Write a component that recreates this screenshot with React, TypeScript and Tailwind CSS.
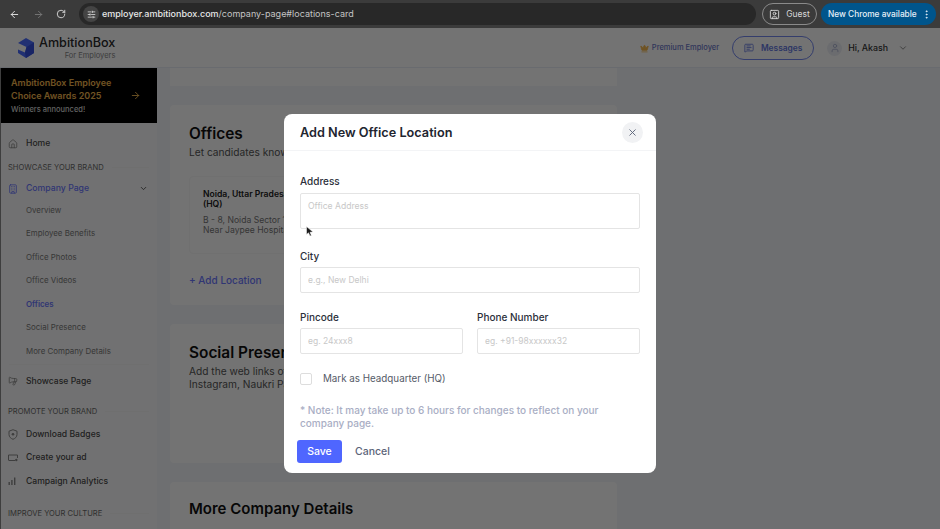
import React from 'react';
import {
  ArrowLeft,
  ArrowRight,
  RotateCw,
  SlidersHorizontal,
  SquareUser,
  EllipsisVertical,
  X,
  House,
  Building,
  ChevronDown,
  Megaphone,
  MessageSquareText,
  User,
  Crown,
} from 'lucide-react';

const subItems = [
  'Overview',
  'Employee Benefits',
  'Office Photos',
  'Office Videos',
  'Offices',
  'Social Presence',
  'More Company Details',
];

function BadgeIcon() {
  return (
    <svg className="h-[11px] w-[10px]" viewBox="0 0 10 11" fill="none" stroke="currentColor" strokeWidth="1">
      <path d="M5 0.7 L9 2.2 V5.5 C9 8 7 9.6 5 10.3 C3 9.6 1 8 1 5.5 V2.2 Z" />
      <circle cx="5" cy="5.3" r="1.3" fill="currentColor" stroke="none" />
    </svg>
  );
}

function AdIcon() {
  return (
    <svg className="h-[8px] w-[10px]" viewBox="0 0 10 8" fill="none" stroke="currentColor" strokeWidth="1">
      <path d="M7 6.5 H1 C0.7 6.5 0.5 6.3 0.5 6 V1 H9.5 V4" />
      <circle cx="8.3" cy="6" r="1.2" fill="currentColor" stroke="none" />
    </svg>
  );
}

function BarsIcon() {
  return (
    <svg className="h-[8px] w-[8px]" viewBox="0 0 8 8" fill="currentColor">
      <rect x="0.5" y="5" width="1.4" height="3" />
      <rect x="3.2" y="3" width="1.4" height="5" />
      <rect x="6" y="0.5" width="1.4" height="7.5" />
    </svg>
  );
}

function SectionLabel({ text, className }: { text: string; className: string }) {
  return (
    <div className={`flex items-center gap-2 pr-2 pl-[7px] ${className}`}>
      <span className="text-[7.6px] leading-none whitespace-nowrap text-[#6a6a6a]">{text}</span>
      <span className="h-px flex-1 bg-[#f6f6f6]" />
    </div>
  );
}

function NavItem({ icon, label, className = '' }: { icon: React.ReactNode; label: string; className?: string }) {
  return (
    <div className={`flex h-[23.5px] items-center pl-[7px] text-[8.6px] font-medium text-[#4a4a4a] ${className}`}>
      <span className="flex w-[18px] items-center text-[#8a8a8a]">{icon}</span>
      {label}
    </div>
  );
}

function Sidebar() {
  return (
    <aside className="flex w-[157px] shrink-0 flex-col border-l border-[#8a8a8a] bg-[#fbfbfc]">
      <div className="flex h-[55px] items-center justify-between bg-black pl-[10px] pr-4">
        <div className="leading-none">
          <p className="text-[9px] leading-[13px] font-semibold text-[#f5b84f]">AmbitionBox Employee</p>
          <p className="text-[9px] leading-[13px] font-semibold text-[#f5b84f]">Choice Awards 2025</p>
          <p className="mt-[2px] text-[7.5px] leading-[11px] font-medium text-[#d8d8d8]">Winners announced!</p>
        </div>
        <ArrowRight className="h-[11px] w-[11px] text-[#f5b84f]" />
      </div>
      <NavItem className="mt-[9px]" label="Home" icon={<House className="h-[10px] w-[10px]" />} />
      <SectionLabel className="mt-[8px]" text="SHOWCASE YOUR BRAND" />
      <div className="mt-[7px] flex h-[21px] items-center pr-[9px] pl-[7px] text-[8.7px] font-medium text-[#6c78ff]">
        <Building className="mr-2 h-[10px] w-[10px]" />
        <span className="flex-1">Company Page</span>
        <ChevronDown className="h-[9px] w-[9px] text-[#333333]" />
      </div>
      {subItems.map((item) => (
        <div
          key={item}
          className={`flex h-[23.5px] items-center pl-[25px] text-[7.9px] ${
            item === 'Offices' ? 'font-semibold text-[#6c78ff]' : 'text-[#7a7a7a]'
          }`}
        >
          {item}
        </div>
      ))}
      <div className="mx-2 h-px bg-[#f6f6f6]" />
      <NavItem className="mt-[5px]" label="Showcase Page" icon={<Megaphone className="h-[10px] w-[10px] -scale-x-100" />} />
      <SectionLabel className="mt-[15px]" text="PROMOTE YOUR BRAND" />
      <NavItem className="mt-[7px]" label="Download Badges" icon={<BadgeIcon />} />
      <NavItem label="Create your ad" icon={<AdIcon />} />
      <NavItem label="Campaign Analytics" icon={<BarsIcon />} />
      <SectionLabel className="mt-[17px]" text="IMPROVE YOUR CULTURE" />
    </aside>
  );
}

function Content() {
  return (
    <main className="ml-[13px] flex w-[447px] shrink-0 flex-col gap-[19px]">
      <div className="h-[18px] shrink-0 bg-white" />
      <section className="h-[200px] shrink-0 rounded bg-white px-[19px] pt-[20px]">
        <h2 className="text-[15.4px] leading-[18px] font-semibold text-[#111111]">Offices</h2>
        <p className="mt-[3px] text-[10.2px] leading-[13px] whitespace-nowrap text-[#555555]">
          Let candidates know where your offices are located
        </p>
        <div className="mt-[17px] h-[78px] w-[200px] rounded border border-[#f8f8f8] px-[13px] pt-[12px]">
          <p className="text-[8.6px] leading-[10px] font-semibold whitespace-nowrap text-[#222222]">Noida, Uttar Pradesh</p>
          <p className="text-[8.6px] leading-[10px] font-semibold text-[#222222]">(HQ)</p>
          <p className="mt-[6px] text-[8.6px] leading-[10px] whitespace-nowrap text-[#777777]">B - 8, Noida Sector 16</p>
          <p className="text-[8.6px] leading-[10px] whitespace-nowrap text-[#777777]">Near Jaypee Hospital</p>
        </div>
        <p className="mt-[19px] text-[10px] leading-[14px] font-medium text-[#6c78ff]">+ Add Location</p>
      </section>
      <section className="h-[139px] shrink-0 rounded bg-white px-[19px] pt-[20px]">
        <h2 className="text-[15.4px] leading-[18px] font-semibold whitespace-nowrap text-[#111111]">Social Presence</h2>
        <p className="mt-[3px] text-[10.2px] leading-[13px] whitespace-nowrap text-[#555555]">Add the web links of your</p>
        <p className="text-[10.2px] leading-[13px] whitespace-nowrap text-[#555555]">Instagram, Naukri Page</p>
      </section>
      <section className="h-[60px] shrink-0 rounded bg-white px-[19px] pt-[18px]">
        <h2 className="text-[15px] leading-[18px] font-semibold whitespace-nowrap text-[#111111]">More Company Details</h2>
      </section>
    </main>
  );
}

function Field({ label, placeholder, className = '', tall = false }: { label: string; placeholder: string; className?: string; tall?: boolean }) {
  return (
    <div className={className}>
      <label className="block text-[10px] leading-[14px] font-medium text-[#2b2f3a]">{label}</label>
      {tall ? (
        <textarea
          readOnly
          placeholder={placeholder}
          className="mt-[5px] block h-[36px] w-full resize-none rounded-[2px] border border-[#e4e4e4] px-[7px] py-[6px] text-[8.6px] leading-[12px] outline-none placeholder:text-[#c8c8c8]"
        />
      ) : (
        <input
          readOnly
          placeholder={placeholder}
          className="mt-[4px] block h-[26px] w-full rounded-[2px] border border-[#e4e4e4] px-[7px] text-[8.5px] outline-none placeholder:text-[#c8c8c8]"
        />
      )}
    </div>
  );
}

function Modal() {
  return (
    <div className="absolute top-[114px] left-[284px] flex h-[359px] w-[372px] flex-col rounded-lg bg-white">
      <div className="flex h-[37px] shrink-0 items-center justify-between border-b border-[#f3f4f6] pr-[13px] pl-4">
        <h3 className="mt-[2px] text-[12.7px] font-semibold text-[#22252f]">Add New Office Location</h3>
        <button className="flex h-[21px] w-[21px] items-center justify-center rounded-full bg-[#f1f2f4] text-[#5b6478]">
          <X className="h-[11px] w-[11px]" />
        </button>
      </div>
      <div className="flex flex-1 flex-col overflow-hidden px-4 pt-[23px]">
        <Field tall label="Address" placeholder="Office Address" />
        <Field className="mt-[20px]" label="City" placeholder="e.g., New Delhi" />
        <div className="mt-[17px] flex gap-[14px]">
          <Field className="w-[163px]" label="Pincode" placeholder="eg. 24xxx8" />
          <Field className="flex-1" label="Phone Number" placeholder="eg. +91-98xxxxxx32" />
        </div>
        <label className="mt-[18px] flex items-center">
          <span className="h-[12px] w-[12px] rounded-[2px] border border-[#dddddd]" />
          <span className="ml-[11px] text-[9.8px] leading-[14px] text-[#555b68]">Mark as Headquarter (HQ)</span>
        </label>
        <p className="mt-[18px] w-[320px] text-[10px] leading-[13px] font-medium text-[#a9aec4]">
          * Note: It may take up to 6 hours for changes to reflect on your company page.
        </p>
      </div>
      <div className="flex h-[33px] shrink-0 items-start pl-[13px]">
        <button className="flex h-[23px] w-[45px] items-center justify-center rounded-[3px] bg-[#4f66ff] text-[10.5px] font-medium text-white">
          Save
        </button>
        <button className="ml-[13px] h-[23px] text-[10.5px] font-medium text-[#5b6478]">Cancel</button>
      </div>
      <svg className="absolute top-[112px] left-[22px] h-[11px] w-[8px]" viewBox="0 0 8 11">
        <path d="M0.5 0.5 L0.5 8.5 L2.5 6.8 L4 10 L5.4 9.4 L4 6.3 L7 6 Z" fill="#1c1c1c" stroke="#ffffff" strokeWidth="0.5" />
      </svg>
    </div>
  );
}

export default function App() {
  return (
    <div className="relative flex h-[529px] w-[940px] flex-col overflow-hidden bg-[#f4f6fa] font-['Inter',sans-serif]">
      <div className="flex h-[68px] shrink-0 flex-col">
        <div className="h-[28px] shrink-0" />
        <header className="flex h-[40px] items-center border-b border-[#e8eef6] bg-white pr-[32px] pl-[17px]">
          <svg className="h-[20px] w-[18px]" viewBox="0 0 18 20">
            <polygon points="9,0 17,4.5 17,15 9,20 1,15 1,11.5 8,14.5 9.5,9 1,5" fill="#4a6cff" />
            <polygon points="9.5,9 17,4.5 17,15 9,20 8,14.5" fill="#3550e0" />
          </svg>
          <div className="ml-[4px] flex flex-col items-end">
            <span className="text-[12.6px] leading-[16px] font-medium text-[#2a2a2a]">AmbitionBox</span>
            <span className="text-[7.5px] leading-[9px] text-[#888888]">For Employers</span>
          </div>
          <div className="ml-auto flex items-center pt-px">
            <Crown className="h-[9px] w-[9px] fill-[#f5b84f] text-[#f5b84f]" />
            <span className="ml-[3px] text-[7.5px] font-medium text-[#6c78c8]">Premium Employer</span>
            <div className="ml-[13px] flex h-[24px] w-[82px] items-center justify-center gap-[7px] rounded-full border border-[#7488f0] text-[8.4px] font-semibold text-[#6478e0]">
              <MessageSquareText className="h-[10px] w-[10px]" />
              Messages
            </div>
            <div className="ml-[13px] flex h-[15px] w-[15px] items-center justify-center rounded-full bg-[#eef0f6] text-[#a8b0d0]">
              <User className="h-[10px] w-[10px]" />
            </div>
            <span className="ml-[6px] text-[8.8px] font-medium text-[#333333]">Hi, Akash</span>
            <ChevronDown className="ml-[10px] h-[10px] w-[10px] text-[#777777]" />
          </div>
        </header>
      </div>
      <div className="flex min-h-0 flex-1">
        <Sidebar />
        <Content />
      </div>

      {/* scrim over the page, browser bar stays on top */}
      <div className="absolute inset-0 bg-black/55" />

      <div className="absolute top-0 left-0 flex h-[28px] w-full items-center bg-[#3b3b3b] pr-1 pl-[9px] text-[#e6e6e6]">
        <ArrowLeft className="h-[11px] w-[11px]" />
        <ArrowRight className="ml-[13px] h-[11px] w-[11px] text-[#777777]" />
        <RotateCw className="ml-[12px] h-[10px] w-[10px]" />
        <div className="ml-[13px] flex h-[22px] w-[677px] items-center rounded-full bg-[#282828] pl-[4px]">
          <span className="flex h-[16px] w-[16px] items-center justify-center rounded-full bg-[#444444]">
            <SlidersHorizontal className="h-[9px] w-[9px]" />
          </span>
          <span className="ml-[3px] text-[9px] font-medium text-[#e8e8e8]">
            employer.ambitionbox.com<span className="font-normal text-[#c4c4c4]">/company-page#locations-card</span>
          </span>
        </div>
        <div className="ml-[6px] flex h-[22px] w-[55px] items-center justify-center gap-[6px] rounded-full border border-[#8a8a8a] text-[8.5px] text-[#d8d8d8]">
          <SquareUser className="h-[11px] w-[11px]" />
          Guest
        </div>
        <div className="ml-[4px] flex h-[22px] w-[115px] items-center justify-between rounded-full bg-[#00558c] pr-[4px] pl-[7px] text-[8.3px] font-medium text-[#e6f0f8]">
          New Chrome available
          <EllipsisVertical className="h-[11px] w-[11px]" />
        </div>
      </div>

      <Modal />
    </div>
  );
}
